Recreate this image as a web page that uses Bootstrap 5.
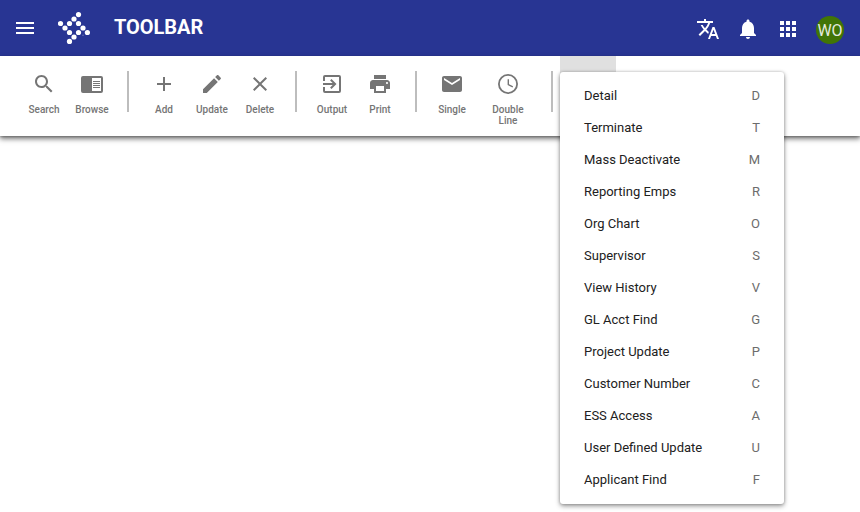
<!DOCTYPE html>
<html lang="en">
<head>
<meta charset="utf-8">
<meta name="viewport" content="width=device-width, initial-scale=1">
<title>Toolbar</title>
<link href="https://cdn.jsdelivr.net/npm/bootstrap@5.3.0/dist/css/bootstrap.min.css" rel="stylesheet">
<style>
body{font-family:Roboto,"Open Sans",sans-serif;background:#fff;min-height:100vh}
svg{display:block;fill:currentColor}
.app-header{height:56px;background:#283593;padding:0 16px}
.app-title{font-size:20px;font-weight:700;line-height:24px;margin-left:24px;padding-bottom:2px;letter-spacing:-.05px}
.icon-cell{width:40px;height:40px;padding:8px}
.header-actions{padding-top:2px}
.avatar{width:28px;height:28px;background:#417505;font-size:16px;font-weight:400;line-height:29px;margin:2px 0 0 8px;color:#e4eadf}
.tool-strip{height:80px;padding-left:20px;background:#fff;box-shadow:0 3px 5px rgba(0,0,0,.5),0 1px 2px rgba(0,0,0,.25)}
.tool{width:48px;padding:16px 0 0;color:#757575;font-size:10px;line-height:11px;font-weight:500}
.tool-label{margin-top:8px}
.tool-wide{width:64px;padding-left:14px;padding-right:14px}
.rule{width:2px;height:41px;margin:15px 11px 0;background:#bdbdbd}
.rule-last{margin-right:7px}
.more{width:56px;height:80px;background:#e0e0e0}
.more-menu{display:block;top:16px;left:0;width:224px;height:432px;padding:8px 0;border:0;border-radius:3px;box-shadow:0 2px 5px rgba(0,0,0,.42),0 0 3px rgba(0,0,0,.2)}
.more-menu .dropdown-item{height:32px;padding:0 24px;font-size:13px;line-height:32px;color:#212121}
.key{color:#6c6c6c}
</style>
</head>
<body>
<header class="app-header d-flex align-items-center text-white">
  <svg width="18" height="12" viewBox="0 0 18 12"><path d="M0 0h18v2H0zM0 5h18v2H0zM0 10h18v2H0z"/></svg>
  <svg class="ms-4" width="32" height="36" viewBox="58 10 32 36"><g><circle cx="78.5" cy="14.6" r="2.6"/><circle cx="74" cy="19" r="2.6"/><circle cx="60.5" cy="23.5" r="2.6"/><circle cx="69.5" cy="23.5" r="2.6"/><circle cx="78.5" cy="23.5" r="2.6"/><circle cx="65" cy="28" r="2.6"/><circle cx="83" cy="28" r="2.6"/><circle cx="69.5" cy="32.5" r="2.6"/><circle cx="78.5" cy="32.5" r="2.6"/><circle cx="87.4" cy="32.5" r="2.6"/><circle cx="74" cy="37" r="2.6"/><circle cx="69.5" cy="41.4" r="2.6"/><circle cx="83" cy="35.3" r=".8" opacity=".3"/></g></svg>
  <div class="app-title">TOOLBAR</div>
  <div class="header-actions d-flex align-items-center ms-auto">
    <div class="icon-cell"><svg width="24" height="24" viewBox="0 0 24 24"><path d="M12.87 15.07l-2.54-2.51.03-.03c1.74-1.94 2.98-4.17 3.71-6.53H17V4h-7V2H8v2H1v1.99h11.17C11.5 7.92 10.44 9.75 9 11.35 8.07 10.32 7.3 9.19 6.69 8h-2c.73 1.63 1.73 3.17 2.98 4.56l-5.09 5.02L4 19l5-5 3.11 3.11.76-2.04zM18.5 10h-2L12 22h2l1.12-3h4.75L21 22h2l-4.5-12zm-2.62 7l1.62-4.33L19.12 17h-3.24z"/></svg></div>
    <div class="icon-cell"><svg width="24" height="24" viewBox="0 0 24 24"><path d="M12 22c1.1 0 2-.9 2-2h-4c0 1.1.89 2 2 2zm6-6v-5c0-3.07-1.64-5.64-4.5-6.32V4c0-.83-.67-1.5-1.5-1.5s-1.500.67-1.500 1.500v.68C7.630 5.360 6 7.920 6 11v5l-2 2v1h16v-1l-2-2z"/></svg></div>
    <div class="icon-cell"><svg width="24" height="24" viewBox="0 0 24 24"><path d="M4 8h4V4H4v4zm6 12h4v-4h-4v4zm-6 0h4v-4H4v4zm0-6h4v-4H4v4zm6 0h4v-4h-4v4zm6-10v4h4V4h-4zm-6 4h4V4h-4v4zm6 6h4v-4h-4v4zm0 6h4v-4h-4v4z"/></svg></div>
    <div class="avatar rounded-circle text-center">WO</div>
  </div>
</header>
<nav class="tool-strip d-flex align-items-start text-center">
  <div class="tool"><svg class="mx-auto" width="24" height="24" viewBox="0 0 24 24"><path d="M15.5 14h-.79l-.28-.27C15.41 12.590 16 11.110 16 9.500 16 5.910 13.090 3 9.500 3S3 5.910 3 9.500 5.910 16 9.500 16c1.610 0 3.090-.59 4.230-1.570l.27.28v.79l5 4.990L20.490 19l-4.990-5zm-6 0C7.010 14 5 11.990 5 9.500S7.010 5 9.500 5 14 7.010 14 9.500 11.990 14 9.500 14z"/></svg><div class="tool-label">Search</div></div>
  <div class="tool"><svg class="mx-auto" width="24" height="24" viewBox="0 0 24 24"><path fill-rule="evenodd" d="M3 4h18a2 2 0 0 1 2 2v13a2 2 0 0 1-2 2H3a2 2 0 0 1-2-2V6a2 2 0 0 1 2-2zm9 2v13h9V6zM13 9h7v1h-7zM13 11h7v1h-7zM13 13h7v1h-7zM13 15h7v1h-7z"/></svg><div class="tool-label">Browse</div></div>
  <div class="rule"></div>
  <div class="tool"><svg class="mx-auto" width="24" height="24" viewBox="0 0 24 24"><path d="M19 13h-6v6h-2v-6H5v-2h6V5h2v6h6v2z"/></svg><div class="tool-label">Add</div></div>
  <div class="tool"><svg class="mx-auto" width="24" height="24" viewBox="0 0 24 24"><path d="M3 17.250V21h3.750L17.810 9.940l-3.750-3.750L3 17.250zM20.710 7.040c.39-.39.39-1.020 0-1.410l-2.340-2.340c-.39-.39-1.020-.39-1.410 0l-1.830 1.830 3.750 3.750 1.830-1.830z"/></svg><div class="tool-label">Update</div></div>
  <div class="tool"><svg class="mx-auto" width="24" height="24" viewBox="0 0 24 24"><path d="M19 6.410L17.590 5 12 10.590 6.410 5 5 6.410 10.590 12 5 17.590 6.410 19 12 13.410 17.590 19 19 17.590 13.410 12z"/></svg><div class="tool-label">Delete</div></div>
  <div class="rule"></div>
  <div class="tool"><svg class="mx-auto" width="24" height="24" viewBox="0 0 24 24"><path d="M5 3h14a2 2 0 0 1 2 2v14a2 2 0 0 1-2 2H5a2 2 0 0 1-2-2v-4h2v4h14V5H5v4H3V5a2 2 0 0 1 2-2zM10.090 15.590L11.500 17l5-5-5-5-1.410 1.410L12.670 11H3v2h9.670z"/></svg><div class="tool-label">Output</div></div>
  <div class="tool"><svg class="mx-auto" width="24" height="24" viewBox="0 0 24 24"><path d="M19 8H5c-1.660 0-3 1.340-3 3v6h4v4h12v-4h4v-6c0-1.660-1.340-3-3-3zm-3 11H8v-5h8v5zm3-7c-.55 0-1-.45-1-1s.45-1 1-1 1 .45 1 1-.45 1-1 1zm-1-9H6v4h12V3z"/></svg><div class="tool-label">Print</div></div>
  <div class="rule"></div>
  <div class="tool"><svg class="mx-auto" width="24" height="24" viewBox="0 0 24 24"><path d="M20 4H4c-1.100 0-1.990.9-1.990 2L2 18c0 1.100.9 2 2 2h16c1.100 0 2-.9 2-2V6c0-1.100-.9-2-2-2zm0 4l-8 5-8-5V6l8 5 8-5v2z"/></svg><div class="tool-label">Single</div></div>
  <div class="tool tool-wide"><svg class="mx-auto" width="24" height="24" viewBox="0 0 24 24"><g fill="none" stroke="currentColor"><circle cx="12" cy="12" r="9.100" stroke-width="1.800"/><path stroke-width="1.400" d="M12.300 7.200v5.400l4.500 2.300"/></g></svg><div class="tool-label">Double Line</div></div>
  <div class="rule rule-last"></div>
  <div class="more dropdown">
    <ul class="dropdown-menu more-menu show">
      <li class="dropdown-item d-flex justify-content-between"><span>Detail</span><span class="key">D</span></li>
      <li class="dropdown-item d-flex justify-content-between"><span>Terminate</span><span class="key">T</span></li>
      <li class="dropdown-item d-flex justify-content-between"><span>Mass Deactivate</span><span class="key">M</span></li>
      <li class="dropdown-item d-flex justify-content-between"><span>Reporting Emps</span><span class="key">R</span></li>
      <li class="dropdown-item d-flex justify-content-between"><span>Org Chart</span><span class="key">O</span></li>
      <li class="dropdown-item d-flex justify-content-between"><span>Supervisor</span><span class="key">S</span></li>
      <li class="dropdown-item d-flex justify-content-between"><span>View History</span><span class="key">V</span></li>
      <li class="dropdown-item d-flex justify-content-between"><span>GL Acct Find</span><span class="key">G</span></li>
      <li class="dropdown-item d-flex justify-content-between"><span>Project Update</span><span class="key">P</span></li>
      <li class="dropdown-item d-flex justify-content-between"><span>Customer Number</span><span class="key">C</span></li>
      <li class="dropdown-item d-flex justify-content-between"><span>ESS Access</span><span class="key">A</span></li>
      <li class="dropdown-item d-flex justify-content-between"><span>User Defined Update</span><span class="key">U</span></li>
      <li class="dropdown-item d-flex justify-content-between"><span>Applicant Find</span><span class="key">F</span></li>
    </ul>
  </div>
</nav>
<script src="https://cdn.jsdelivr.net/npm/bootstrap@5.3.0/dist/js/bootstrap.bundle.min.js"></script>
</body>
</html>
